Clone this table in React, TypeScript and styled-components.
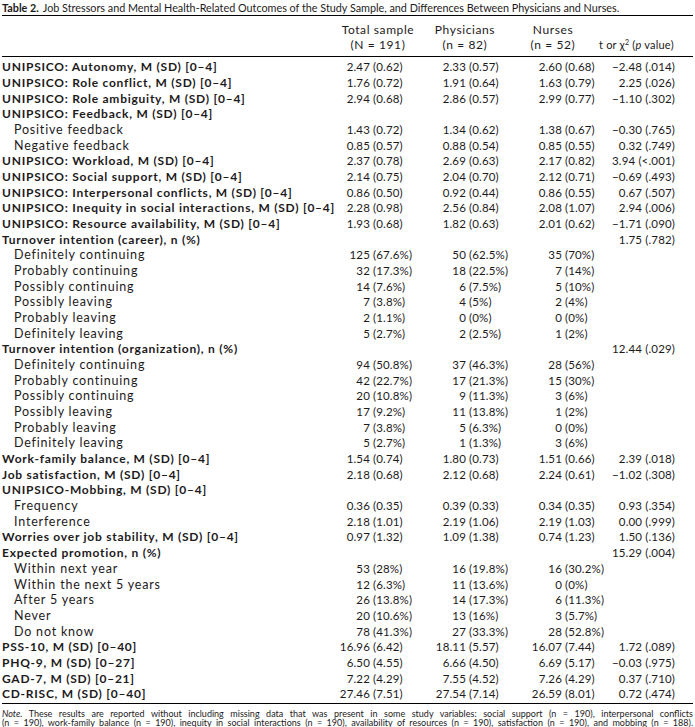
import * as React from 'react'
import styled, { createGlobalStyle } from 'styled-components'

const GlobalStyle = createGlobalStyle`
  body {
    margin: 0;
    background: #fff;
    color: #1d1a1b;
    font-family: Lato, 'Open Sans', sans-serif;
  }
`

const COLUMNS = '333px 96px 96px 72px 1fr'

const Page = styled.div`
  width: 695px;
  padding: 0 2px;
  box-sizing: border-box;
`

const Caption = styled.div`
  font-size: 10.8px;
  line-height: 15px;
  white-space: nowrap;
  b {
    font-weight: 700;
    margin-right: 4px;
  }
`

const Table = styled.div`
  border-top: 1px solid #000;
  border-bottom: 1px solid #000;
`

const HeaderRow = styled.div`
  display: grid;
  grid-template-columns: ${COLUMNS};
  align-items: end;
  height: 41px;
  box-sizing: border-box;
  padding: 6px 0 5px;
  border-bottom: 1px solid #000;
  font-size: 12px;
  line-height: 15px;
`

const HeaderCell = styled.div<{ $shift?: number }>`
  text-align: center;
  padding-right: ${(p) => p.$shift ?? 0}px;
  white-space: nowrap;
  letter-spacing: 0.6px;
`

const StatHeader = styled.div`
  white-space: nowrap;
  font-size: 11px;
  letter-spacing: 0.2px;
  sup {
    font-size: 7px;
    vertical-align: 4px;
    line-height: 0;
  }
  i {
    font-style: italic;
  }
`

const Body = styled.div`
  padding: 2px 0 1px;
`

const Row = styled.div`
  display: grid;
  grid-template-columns: ${COLUMNS};
  align-items: center;
  height: 15.68px;
  font-size: 11.5px;
  letter-spacing: 0.15px;
  white-space: nowrap;
`

const Label = styled.div<{ $sub?: boolean }>`
  font-size: ${(p) => (p.$sub ? 12.5 : 12)}px;
  font-weight: ${(p) => (p.$sub ? 400 : 700)};
  letter-spacing: ${(p) => (p.$sub ? 0.8 : 0.75)}px;
  padding-left: ${(p) => (p.$sub ? 12 : 0)}px;
`

const Cell = styled.div`
  display: flex;
`

const Num = styled.span`
  width: 35px;
  text-align: right;
  flex: none;
`

const Paren = styled.span`
  margin-left: 3px;
`

const Stat = styled.div`
  text-align: right;
  padding-right: 18px;
`

const Note = styled.div`
  font-size: 9px;
  line-height: 9.5px;
  padding-top: 5px;
  i {
    font-style: italic;
  }
`

const NoteLine = styled.div`
  text-align: justify;
  text-align-last: justify;
`

type Line = {
  label: string
  sub?: boolean
  total?: string
  phys?: string
  nurse?: string
  t?: string
}

const rows: Line[] = [
  { label: 'UNIPSICO: Autonomy, M (SD) [0–4]', total: '2.47 (0.62)', phys: '2.33 (0.57)', nurse: '2.60 (0.68)', t: '−2.48 (.014)' },
  { label: 'UNIPSICO: Role conflict, M (SD) [0–4]', total: '1.76 (0.72)', phys: '1.91 (0.64)', nurse: '1.63 (0.79)', t: '2.25 (.026)' },
  { label: 'UNIPSICO: Role ambiguity, M (SD) [0–4]', total: '2.94 (0.68)', phys: '2.86 (0.57)', nurse: '2.99 (0.77)', t: '−1.10 (.302)' },
  { label: 'UNIPSICO: Feedback, M (SD) [0–4]' },
  { label: 'Positive feedback', sub: true, total: '1.43 (0.72)', phys: '1.34 (0.62)', nurse: '1.38 (0.67)', t: '−0.30 (.765)' },
  { label: 'Negative feedback', sub: true, total: '0.85 (0.57)', phys: '0.88 (0.54)', nurse: '0.85 (0.55)', t: '0.32 (.749)' },
  { label: 'UNIPSICO: Workload, M (SD) [0–4]', total: '2.37 (0.78)', phys: '2.69 (0.63)', nurse: '2.17 (0.82)', t: '3.94 (<.001)' },
  { label: 'UNIPSICO: Social support, M (SD) [0–4]', total: '2.14 (0.75)', phys: '2.04 (0.70)', nurse: '2.12 (0.71)', t: '−0.69 (.493)' },
  { label: 'UNIPSICO: Interpersonal conflicts, M (SD) [0–4]', total: '0.86 (0.50)', phys: '0.92 (0.44)', nurse: '0.86 (0.55)', t: '0.67 (.507)' },
  { label: 'UNIPSICO: Inequity in social interactions, M (SD) [0–4]', total: '2.28 (0.98)', phys: '2.56 (0.84)', nurse: '2.08 (1.07)', t: '2.94 (.006)' },
  { label: 'UNIPSICO: Resource availability, M (SD) [0–4]', total: '1.93 (0.68)', phys: '1.82 (0.63)', nurse: '2.01 (0.62)', t: '−1.71 (.090)' },
  { label: 'Turnover intention (career), n (%)', t: '1.75 (.782)' },
  { label: 'Definitely continuing', sub: true, total: '125 (67.6%)', phys: '50 (62.5%)', nurse: '35 (70%)' },
  { label: 'Probably continuing', sub: true, total: '32 (17.3%)', phys: '18 (22.5%)', nurse: '7 (14%)' },
  { label: 'Possibly continuing', sub: true, total: '14 (7.6%)', phys: '6 (7.5%)', nurse: '5 (10%)' },
  { label: 'Possibly leaving', sub: true, total: '7 (3.8%)', phys: '4 (5%)', nurse: '2 (4%)' },
  { label: 'Probably leaving', sub: true, total: '2 (1.1%)', phys: '0 (0%)', nurse: '0 (0%)' },
  { label: 'Definitely leaving', sub: true, total: '5 (2.7%)', phys: '2 (2.5%)', nurse: '1 (2%)' },
  { label: 'Turnover intention (organization), n (%)', t: '12.44 (.029)' },
  { label: 'Definitely continuing', sub: true, total: '94 (50.8%)', phys: '37 (46.3%)', nurse: '28 (56%)' },
  { label: 'Probably continuing', sub: true, total: '42 (22.7%)', phys: '17 (21.3%)', nurse: '15 (30%)' },
  { label: 'Possibly continuing', sub: true, total: '20 (10.8%)', phys: '9 (11.3%)', nurse: '3 (6%)' },
  { label: 'Possibly leaving', sub: true, total: '17 (9.2%)', phys: '11 (13.8%)', nurse: '1 (2%)' },
  { label: 'Probably leaving', sub: true, total: '7 (3.8%)', phys: '5 (6.3%)', nurse: '0 (0%)' },
  { label: 'Definitely leaving', sub: true, total: '5 (2.7%)', phys: '1 (1.3%)', nurse: '3 (6%)' },
  { label: 'Work-family balance, M (SD) [0–4]', total: '1.54 (0.74)', phys: '1.80 (0.73)', nurse: '1.51 (0.66)', t: '2.39 (.018)' },
  { label: 'Job satisfaction, M (SD) [0–4]', total: '2.18 (0.68)', phys: '2.12 (0.68)', nurse: '2.24 (0.61)', t: '−1.02 (.308)' },
  { label: 'UNIPSICO-Mobbing, M (SD) [0–4]' },
  { label: 'Frequency', sub: true, total: '0.36 (0.35)', phys: '0.39 (0.33)', nurse: '0.34 (0.35)', t: '0.93 (.354)' },
  { label: 'Interference', sub: true, total: '2.18 (1.01)', phys: '2.19 (1.06)', nurse: '2.19 (1.03)', t: '0.00 (.999)' },
  { label: 'Worries over job stability, M (SD) [0–4]', total: '0.97 (1.32)', phys: '1.09 (1.38)', nurse: '0.74 (1.23)', t: '1.50 (.136)' },
  { label: 'Expected promotion, n (%)', t: '15.29 (.004)' },
  { label: 'Within next year', sub: true, total: '53 (28%)', phys: '16 (19.8%)', nurse: '16 (30.2%)' },
  { label: 'Within the next 5 years', sub: true, total: '12 (6.3%)', phys: '11 (13.6%)', nurse: '0 (0%)' },
  { label: 'After 5 years', sub: true, total: '26 (13.8%)', phys: '14 (17.3%)', nurse: '6 (11.3%)' },
  { label: 'Never', sub: true, total: '20 (10.6%)', phys: '13 (16%)', nurse: '3 (5.7%)' },
  { label: 'Do not know', sub: true, total: '78 (41.3%)', phys: '27 (33.3%)', nurse: '28 (52.8%)' },
  { label: 'PSS-10, M (SD) [0–40]', total: '16.96 (6.42)', phys: '18.11 (5.57)', nurse: '16.07 (7.44)', t: '1.72 (.089)' },
  { label: 'PHQ-9, M (SD) [0–27]', total: '6.50 (4.55)', phys: '6.66 (4.50)', nurse: '6.69 (5.17)', t: '−0.03 (.975)' },
  { label: 'GAD-7, M (SD) [0–21]', total: '7.22 (4.29)', phys: '7.55 (4.52)', nurse: '7.26 (4.29)', t: '0.37 (.710)' },
  { label: 'CD-RISC, M (SD) [0–40]', total: '27.46 (7.51)', phys: '27.54 (7.14)', nurse: '26.59 (8.01)', t: '0.72 (.474)' },
]

const Value = ({ text }: { text?: string }) => {
  if (!text) return <Cell />
  const cut = text.indexOf(' ')
  return (
    <Cell>
      <Num>{text.slice(0, cut)}</Num>
      <Paren>{text.slice(cut + 1)}</Paren>
    </Cell>
  )
}

export default function App() {
  return (
    <Page>
      <GlobalStyle />
      <Caption>
        <b>Table 2.</b>Job Stressors and Mental Health-Related Outcomes of the
        Study Sample, and Differences Between Physicians and Nurses.
      </Caption>
      <Table>
        <HeaderRow>
          <div />
          <HeaderCell $shift={10}>
            Total sample
            <br />
            (N = 191)
          </HeaderCell>
          <HeaderCell $shift={28}>
            Physicians
            <br />
            (n = 82)
          </HeaderCell>
          <HeaderCell $shift={20}>
            Nurses
            <br />
            (n = 52)
          </HeaderCell>
          <StatHeader>
            t or χ<sup>2</sup> (<i>p</i> value)
          </StatHeader>
        </HeaderRow>
        <Body>
          {rows.map((row, index) => (
            <Row key={index}>
              <Label $sub={row.sub}>{row.label}</Label>
              <Value text={row.total} />
              <Value text={row.phys} />
              <Value text={row.nurse} />
              <Stat>{row.t}</Stat>
            </Row>
          ))}
        </Body>
      </Table>
      <Note>
        <NoteLine>
          <i>Note.</i> These results are reported without including missing data
          that was present in some study variables: social support (n = 190),
          interpersonal conflicts
        </NoteLine>
        <NoteLine>
          (n = 190), work-family balance (n = 190), inequity in social
          interactions (n = 190), availability of resources (n = 190),
          satisfaction (n = 190), and mobbing (n = 188).
        </NoteLine>
      </Note>
    </Page>
  )
}
